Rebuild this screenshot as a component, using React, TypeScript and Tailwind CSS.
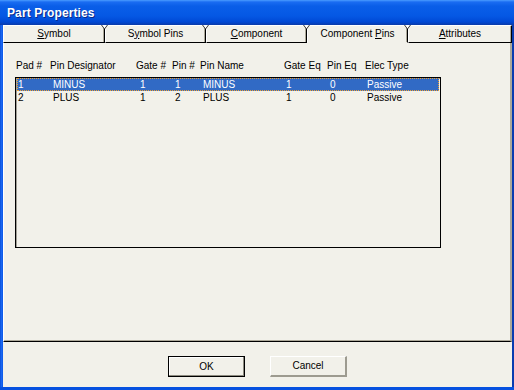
import React from "react";

const FONT = { fontFamily: '"Liberation Sans", Arial, sans-serif' };

function Notch() {
  return (
    <svg className="absolute -top-px -right-[4px] z-10" width="7" height="5" viewBox="0 0 7 5">
      <polygon points="0,0 7,0 3.5,4" fill="#ffffff" />
      <path d="M0.5 0 L3.5 4 M6.5 0 L3.5 4" stroke="#3a3a3a" strokeWidth="1" fill="none" />
    </svg>
  );
}

function Tab({
  pre,
  u,
  post,
  active,
  w,
  last,
}: {
  pre: string;
  u: string;
  post: string;
  active?: boolean;
  w: string;
  last?: boolean;
}) {
  return (
    <div
      className={
        "relative flex h-[18px] items-center justify-center border-t border-l border-r border-b border-t-white border-l-white border-r-black text-[10px] leading-none text-black shadow-[inset_-1px_0_0_#aca899] " +
        w +
        (active ? " border-b-[#f2f1ea]" : " border-b-black")
      }
    >
      <span className="pb-[1px]">
        {pre}
        <span className="underline underline-offset-[1px]">{u}</span>
        {post}
      </span>
      {!last && <Notch />}
    </div>
  );
}

const rows = [
  { pad: "1", des: "MINUS", gate: "1", pin: "1", name: "MINUS", geq: "1", peq: "0", type: "Passive", sel: true },
  { pad: "2", des: "PLUS", gate: "1", pin: "2", name: "PLUS", geq: "1", peq: "0", type: "Passive", sel: false },
];

export default function App() {
  return (
    <div className="flex h-[390px] w-[514px] flex-col bg-[#0651e0] text-black" style={FONT}>
      {/* Title bar */}
      <div className="flex h-[25px] items-center bg-[linear-gradient(to_bottom,#4a9cff_0px,#1a6cf2_2px,#0a5ee8_6px,#0558e4_16px,#0048d4_22px,#0a3aa8_25px)] pl-[7px]">
        <span className="text-[12px] font-bold leading-none tracking-[0.1px] text-white [text-shadow:1px_1px_0_#0a2a8a]">
          Part Properties
        </span>
      </div>

      <div className="flex flex-1 pb-[3px]">
        <div className="w-[3px] bg-[linear-gradient(to_right,#0a4fd8,#1a66f0,#0a58e8)]" />
        <div className="flex w-[509px] flex-col bg-[#f2f1ea]">
          {/* Tabs */}
          <div className="relative flex">
            <Tab pre="" u="S" post="ymbol" w="w-[102px]" />
            <Tab pre="S" u="y" post="mbol Pins" w="w-[101px]" />
            <Tab pre="" u="C" post="omponent" w="w-[101px]" />
            <Tab pre="Component " u="P" post="ins" w="w-[101px]" active />
            <Tab pre="" u="A" post="ttributes" w="w-[104px]" last />
          </div>

          {/* Panel */}
          <div className="flex h-[299px] flex-col border-l border-r-2 border-b border-l-white border-r-[#aca899] border-b-black shadow-[inset_0_-1px_0_#aca899]">
            {/* headers */}
            <div className="ml-[12px] mt-[17px] grid h-[12px] grid-cols-[34px_86px_36px_28px_84px_43px_38px_1fr] items-center text-[10px] leading-none">
              <span>Pad #</span>
              <span>Pin Designator</span>
              <span>Gate #</span>
              <span>Pin #</span>
              <span>Pin Name</span>
              <span>Gate Eq</span>
              <span>Pin Eq</span>
              <span>Elec Type</span>
            </div>

            {/* list */}
            <div className="ml-[11px] mt-[5px] h-[171px] w-[426px] border border-black bg-[#f2f1ea] shadow-[inset_1px_1px_0_#a09e94]">
              <div className="flex flex-col pl-[1px] pr-px">
                {rows.map((r, i) => (
                  <div
                    key={i}
                    className={
                      "grid h-[13px] grid-cols-[35px_87px_35px_28px_83px_44px_37px_1fr] items-center text-[10px] leading-none " +
                      (r.sel
                        ? "border border-dotted border-[#f0a030] bg-[#316ac5] pl-[0px] text-white"
                        : "pl-[1px] text-black")
                    }
                  >
                    <span>{r.pad}</span>
                    <span>{r.des}</span>
                    <span>{r.gate}</span>
                    <span>{r.pin}</span>
                    <span>{r.name}</span>
                    <span>{r.geq}</span>
                    <span>{r.peq}</span>
                    <span>{r.type}</span>
                  </div>
                ))}
              </div>
            </div>
          </div>

          {/* Buttons */}
          <div className="flex h-[45px] justify-center gap-[25px] pt-[14px]">
            <div className="flex h-[21px] w-[77px] items-center justify-center border border-black text-[10px] leading-none shadow-[inset_-1px_-1px_0_#8d8b80,inset_1px_1px_0_#ffffff]">
              OK
            </div>
            <div className="flex h-[21px] w-[77px] items-center justify-center border-t border-l border-r-2 border-b-2 border-t-white border-l-white border-r-[#9d9b90] border-b-[#9d9b90] text-[10px] leading-none">
              Cancel
            </div>
          </div>
        </div>
        <div className="w-[2px] bg-[#0a3cb0]" />
      </div>
    </div>
  );
}
